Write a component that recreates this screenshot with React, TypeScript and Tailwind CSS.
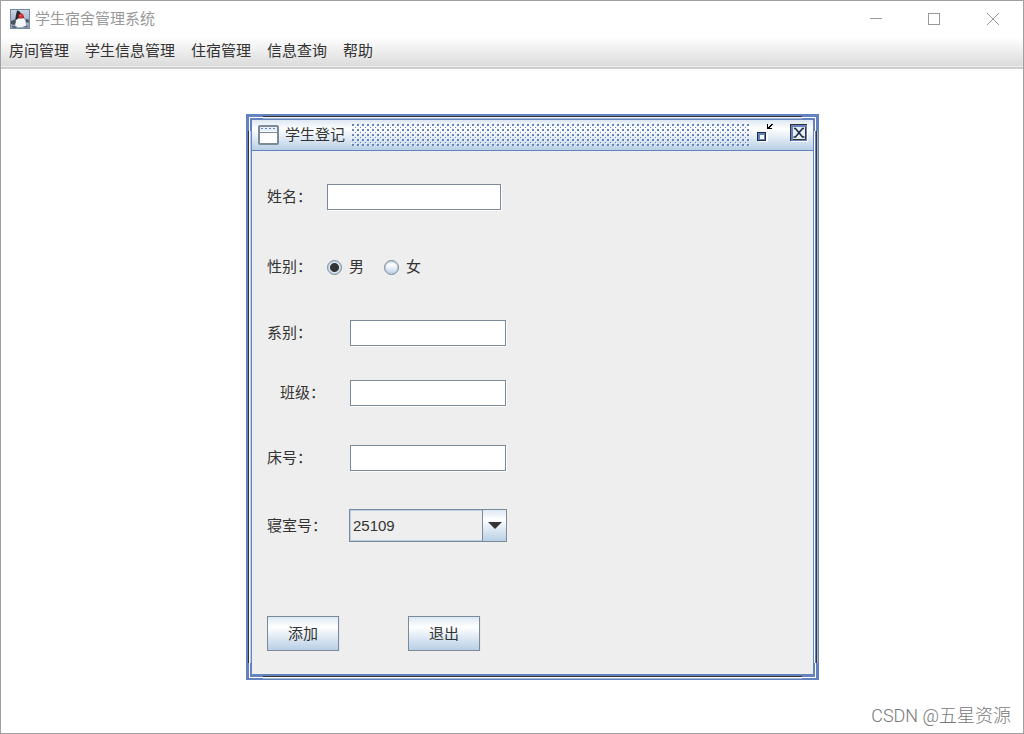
import { useState } from 'react';
import type { ReactNode } from 'react';

const menus = ['房间管理', '学生信息管理', '住宿管理', '信息查询', '帮助'];
const rooms = ['25109', '25110', '25111'];

const JavaIcon = () => (
  <svg width="20" height="20" viewBox="0 0 20 20" aria-hidden="true">
    <defs>
      <linearGradient id="tile" x1="0" y1="0" x2="0" y2="1">
        <stop offset="0" stopColor="#c9d6e4" />
        <stop offset="1" stopColor="#8b9fb6" />
      </linearGradient>
    </defs>
    <rect x="0.5" y="0.5" width="19" height="19" fill="url(#tile)" stroke="#7188a3" />
    <path d="M7 1.5 L9 2 L13.5 7 L14.5 10 L10 9.5 L5 12 L6 6 Z" fill="#26282c" />
    <path d="M5 12 L8 9.5 L13.5 9 L15.5 12 L16 17 L12 18 L7 18.5 L5.5 17 Z" fill="#f4f6f8" />
    <path d="M1 12 L5 10.5 L6 13 L4.5 16 L1 15 Z M15.5 10 L18.5 10.5 L19 13.5 L16 13.5 Z" fill="#4a525c" />
    <path d="M2 16.5 L8 18 L5 19 L2 18.5 Z M13 18 L17 16.5 L18 18.5 Z" fill="#59626d" />
    <circle cx="11" cy="7" r="2.6" fill="#de2b2b" />
    <circle cx="10.5" cy="6.5" r="0.8" fill="#ff6a5e" />
  </svg>
);

const WindowFrame = ({ children }: { children: ReactNode }) => (
  <div className="relative w-[573px] border-t-2 border-r border-b border-l-2 border-[#6382bf]">
    <div className="border border-t-[#333] border-r-[#a3b8cc] border-b-[#a3b8cc] border-l-[#333]">
      <div className="border border-t-[#eef3f9] border-r-[#333] border-b-white border-l-white">
        <div className="border border-t-[#a3b8cc] border-r-[#6382bf] border-b-[#333] border-l-[#b8cfe5]">
          <div className="border border-t-[#6382bf] border-r-white border-b-[#6382bf] border-l-[#6382bf]">
            <div className="border-r border-b border-[#6382bf]">{children}</div>
          </div>
        </div>
      </div>
    </div>
    <div className="pointer-events-none absolute -top-0.5 -left-0.5 size-[17px] border-t-[3px] border-l-[3px] border-[#6382bf]">
      <div className="size-full border-t border-l border-white">
        <div className="size-full border-t-2 border-l-2 border-[#6382bf]" />
      </div>
    </div>
    <div className="pointer-events-none absolute -top-0.5 -right-px size-[17px] border-t-[3px] border-r-[3px] border-[#6382bf]">
      <div className="size-full border-t border-r border-white">
        <div className="size-full border-t-2 border-r-2 border-[#6382bf]" />
      </div>
    </div>
    <div className="pointer-events-none absolute -bottom-px -left-0.5 size-[17px] border-b-2 border-l-[3px] border-[#6382bf]">
      <div className="size-full border-b border-l border-white">
        <div className="size-full border-b-[3px] border-l-2 border-[#6382bf]" />
      </div>
    </div>
    <div className="pointer-events-none absolute -right-px -bottom-px size-[17px] border-r-[3px] border-b-2 border-[#6382bf]">
      <div className="size-full border-r border-b border-white">
        <div className="size-full border-r-2 border-b-[3px] border-[#6382bf]" />
      </div>
    </div>
  </div>
);

const FrameTitle = () => (
  <div className="flex h-[31px] items-center border-b border-[#6382bf] bg-linear-to-b from-[#dde8f3] via-white via-30% to-[#b8cfe5] pr-[5px] pl-1.5">
    <svg width="21" height="20" viewBox="0 0 21 20" aria-hidden="true">
      <rect x="1" y="1" width="19" height="18" rx="1" fill="#fff" stroke="#7a8a99" strokeWidth="2" />
      <path d="M2 2h17v4h-17z" fill="#e6eef7" />
      <path d="M3 3.5h15" stroke="#6382bf" strokeDasharray="2 2" />
      <path d="M2 7.5h17" stroke="#7a8a99" />
    </svg>
    <h1 className="ml-1.5 text-[15px] leading-5">学生登记</h1>
    <svg className="ml-1.5 h-6 min-w-0 flex-1" aria-hidden="true">
      <defs>
        <pattern id="bumps" width="5" height="5" patternUnits="userSpaceOnUse">
          <path d="M0 0h1v1h-1z M3 2h1v1h-1z" fill="#fff" />
          <path d="M1 1h2v2h-2z M4 4h1v1h-1z" fill="#6382bf" />
        </pattern>
      </defs>
      <rect width="100%" height="100%" fill="url(#bumps)" />
    </svg>
    <div className="ml-1.5 flex items-end gap-4 pb-1">
      <button type="button" aria-label="最小化">
        <svg className="block" width="18" height="20" viewBox="0 0 18 20" shapeRendering="crispEdges">
          <rect x="2" y="10" width="10" height="9" fill="#fff" />
          <rect x="1" y="9" width="9" height="9" fill="#6382bf" />
          <path d="M1 9h9v1h-9zM1 9h1v8h-1zM1 17h9v1h-9zM9 9h1v8h-1z" fill="#1d2b4a" />
          <rect x="4" y="12" width="4" height="4" fill="#fff" />
          <path d="M11 1h1v4h4v1h-5zM12 4h1v-1h1v-1h1v-1h2v1h-1v1h-1v1h-1v1h-2z" fill="#000" />
        </svg>
      </button>
      <button type="button" aria-label="关闭">
        <svg className="block" width="18" height="19" viewBox="0 0 18 19">
          <path d="M1 17.5h17M17.5 1v17" stroke="#fff" />
          <path d="M0 0h17v17h-17z" fill="#333" />
          <path d="M1 1h16v16h-16z" fill="#6382bf" />
          <path d="M3 3h12v12h-12z" fill="#e6eef7" />
          <path d="M15.5 3v12.5h-12.5" fill="none" stroke="#333" />
          <path d="M4 4.500h1.500l7 8.500h2M14 4.500h-1.500l-7 8.500h-2" fill="none" stroke="#1d2b4a" strokeWidth="1.6" />
        </svg>
      </button>
    </div>
  </div>
);

const field = 'h-[26px] border border-[#7a8a99] bg-white px-1 text-[15px] shadow-[1px_1px_0_#fff] outline-none';
const radio =
  'size-[15px] appearance-none rounded-full border border-[#7a8a99] bg-linear-to-b from-[#dde8f3] via-white via-30% to-[#b8cfe5] shadow-[inset_0_0_0_1px_#b8cfe5] checked:bg-[radial-gradient(circle,#333_0_4px,#dde8f3_5px)]';
const button =
  'h-[35px] w-[72px] border border-[#7a8a99] bg-linear-to-b from-[#dde8f3] via-white via-30% to-[#b8cfe5] text-[15px] leading-5 shadow-[1px_0_0_#dde8f3]';

const StudentForm = () => {
  const [gender, setGender] = useState('男');
  const [room, setRoom] = useState(rooms[0]);

  return (
    <form className="bg-[#eee] pt-[33px] pb-[23px] pl-[15px]" onSubmit={(e) => e.preventDefault()}>
      <div className="flex items-center">
        <label htmlFor="name" className="w-[60px]">姓名：</label>
        <input id="name" type="text" className={`w-[174px] ${field}`} />
      </div>
      <div role="radiogroup" aria-labelledby="gender" className="mt-11 flex h-[26px] items-center">
        <span id="gender" className="w-[60px]">性别：</span>
        {['男', '女'].map((value) => (
          <label key={value} className="mr-5 flex items-center gap-[7px]">
            <input type="radio" name="gender" className={radio} checked={gender === value} onChange={() => setGender(value)} />
            {value}
          </label>
        ))}
      </div>
      <div className="mt-10 flex items-center">
        <label htmlFor="department" className="w-[83px]">系别：</label>
        <input id="department" type="text" className={`w-[156px] ${field}`} />
      </div>
      <div className="mt-[34px] flex items-center">
        <label htmlFor="class" className="w-[83px] pl-[13px]">班级：</label>
        <input id="class" type="text" className={`w-[156px] ${field}`} />
      </div>
      <div className="mt-[39px] flex items-center">
        <label htmlFor="bed" className="w-[83px]">床号：</label>
        <input id="bed" type="text" className={`w-[156px] ${field}`} />
      </div>
      <div className="mt-[38px] flex items-center">
        <label htmlFor="room" className="w-[82px]">寝室号：</label>
        <div className="relative h-[33px] w-[158px] border border-[#7a8a99]">
          <select
            id="room"
            value={room}
            onChange={(e) => setRoom(e.target.value)}
            className="block size-full appearance-none border border-[#b8cfe5] bg-[#eee] pl-0.5 text-[15px] outline-none"
          >
            {rooms.map((r) => (
              <option key={r}>{r}</option>
            ))}
          </select>
          <span className="pointer-events-none absolute inset-y-0 right-0 flex w-6 items-center justify-center border-l border-[#7a8a99] bg-linear-to-b from-[#dde8f3] via-white via-30% to-[#b8cfe5]">
            <svg width="14" height="7" viewBox="0 0 14 7" aria-hidden="true">
              <path d="M0 0h14l-7 7z" fill="#333" />
            </svg>
          </span>
        </div>
      </div>
      <div className="mt-[74px] flex gap-[69px]">
        <button type="submit" className={button}>添加</button>
        <button type="button" className={button}>退出</button>
      </div>
    </form>
  );
};

export default function App() {
  return (
    <div
      lang="zh-CN"
      className="relative flex min-h-screen flex-col border border-[#a0a0a0] bg-white font-['Liberation_Sans','Noto_Sans_CJK_SC',sans-serif] text-[15px] leading-5 text-[#333]"
    >
      <header className="flex h-9 items-center pl-[9px]">
        <JavaIcon />
        <span className="ml-[5px] flex-1 text-[#999]">学生宿舍管理系统</span>
        <button type="button" aria-label="最小化" className="flex w-[58px] justify-center">
          <svg width="12" height="12" viewBox="0 0 12 12" shapeRendering="crispEdges">
            <path d="M0 5.5h12" stroke="#999" />
          </svg>
        </button>
        <button type="button" aria-label="最大化" className="flex w-[58px] justify-center">
          <svg width="12" height="12" viewBox="0 0 12 12">
            <rect x="0.5" y="0.5" width="11" height="11" fill="none" stroke="#999" />
          </svg>
        </button>
        <button type="button" aria-label="关闭" className="flex w-[60px] justify-center">
          <svg width="12" height="12" viewBox="0 0 12 12">
            <path d="M0 0l12 12M12 0L0 12" stroke="#999" />
          </svg>
        </button>
      </header>
      <nav className="flex h-8 items-start gap-4 border-b-2 border-[#ccc] bg-linear-to-b from-white to-[#dadada] pt-1 pl-2 shadow-[inset_0_-1px_0_#eee]">
        {menus.map((menu) => (
          <button key={menu} type="button">{menu}</button>
        ))}
      </nav>
      <main className="flex-1 pt-[45px] pb-[53px] pl-[245px]">
        <WindowFrame>
          <FrameTitle />
          <StudentForm />
        </WindowFrame>
      </main>
      <p className="absolute right-3 bottom-[7px] font-['Roboto','Noto_Sans_CJK_SC',sans-serif] text-[18px] leading-5 font-light text-[#777]">
        CSDN @五星资源
      </p>
    </div>
  );
}
